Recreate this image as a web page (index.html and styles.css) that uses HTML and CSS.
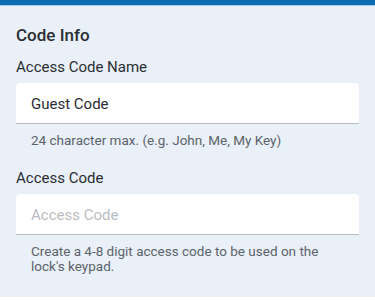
FILE: index.html
```html
<!DOCTYPE html>
<html lang="en">
    <head>
        <title>Code Info</title>
        <link rel="stylesheet" href="styles.css">
    </head>
    <body>
        <div class="TopBar"></div>
        <div class="Page">
            <h2 class="SectionTitle">Code Info</h2>

            <div class="Field">
                <label class="FieldLabel" for="codeName">Access Code Name</label>
                <div class="InputBox">
                    <input id="codeName" type="text" value="Guest Code">
                </div>
                <p class="Helper">24 character max. (e.g. John, Me, My Key)</p>
            </div>

            <div class="Field">
                <label class="FieldLabel" for="code">Access Code</label>
                <div class="InputBox">
                    <input id="code" type="text" placeholder="Access Code">
                </div>
                <p class="Helper">Create a 4-8 digit access code to be used on the lock's keypad.</p>
            </div>
        </div>
    </body>
</html>
```
FILE: styles.css
```css
body{
    margin: 0;
    background: #ffffff;
    font-family: Roboto, "Noto Sans", sans-serif;
    color: #2a2e33;
}

.TopBar{
    height: 5px;
    background: #0b6cb1;
    border-bottom: 1px solid #9fcdee;
}

.Page{
    background: #e9f0f8;
    height: 291px;
    padding: 19px 16px 0 16px;
    box-sizing: border-box;
}

.SectionTitle{
    margin: 0;
    font-size: 17px;
    font-weight: 500;
    line-height: 20px;
}

.Field{
    margin-top: 12px;
}

.Field + .Field{
    margin-top: 20px;
}

.FieldLabel{
    display: block;
    font-size: 15px;
    line-height: 20px;
}

.InputBox{
    margin-top: 6px;
    background: #ffffff;
    border-radius: 4px 4px 0 0;
    border-bottom: 1px solid #b7bcc2;
    height: 40px;
    display: flex;
    align-items: center;
}

.InputBox input{
    border: none;
    outline: none;
    background: transparent;
    width: 100%;
    padding: 1px 15px 0 15px;
    font-family: Roboto, "Noto Sans", sans-serif;
    font-size: 15px;
    color: #2a2e33;
}

.InputBox input::placeholder{
    color: #b9bdc2;
}

.Helper{
    margin: 9px 0 0 0;
    padding: 0 15px;
    font-size: 13.5px;
    line-height: 15px;
    color: #5c636b;
}
```
